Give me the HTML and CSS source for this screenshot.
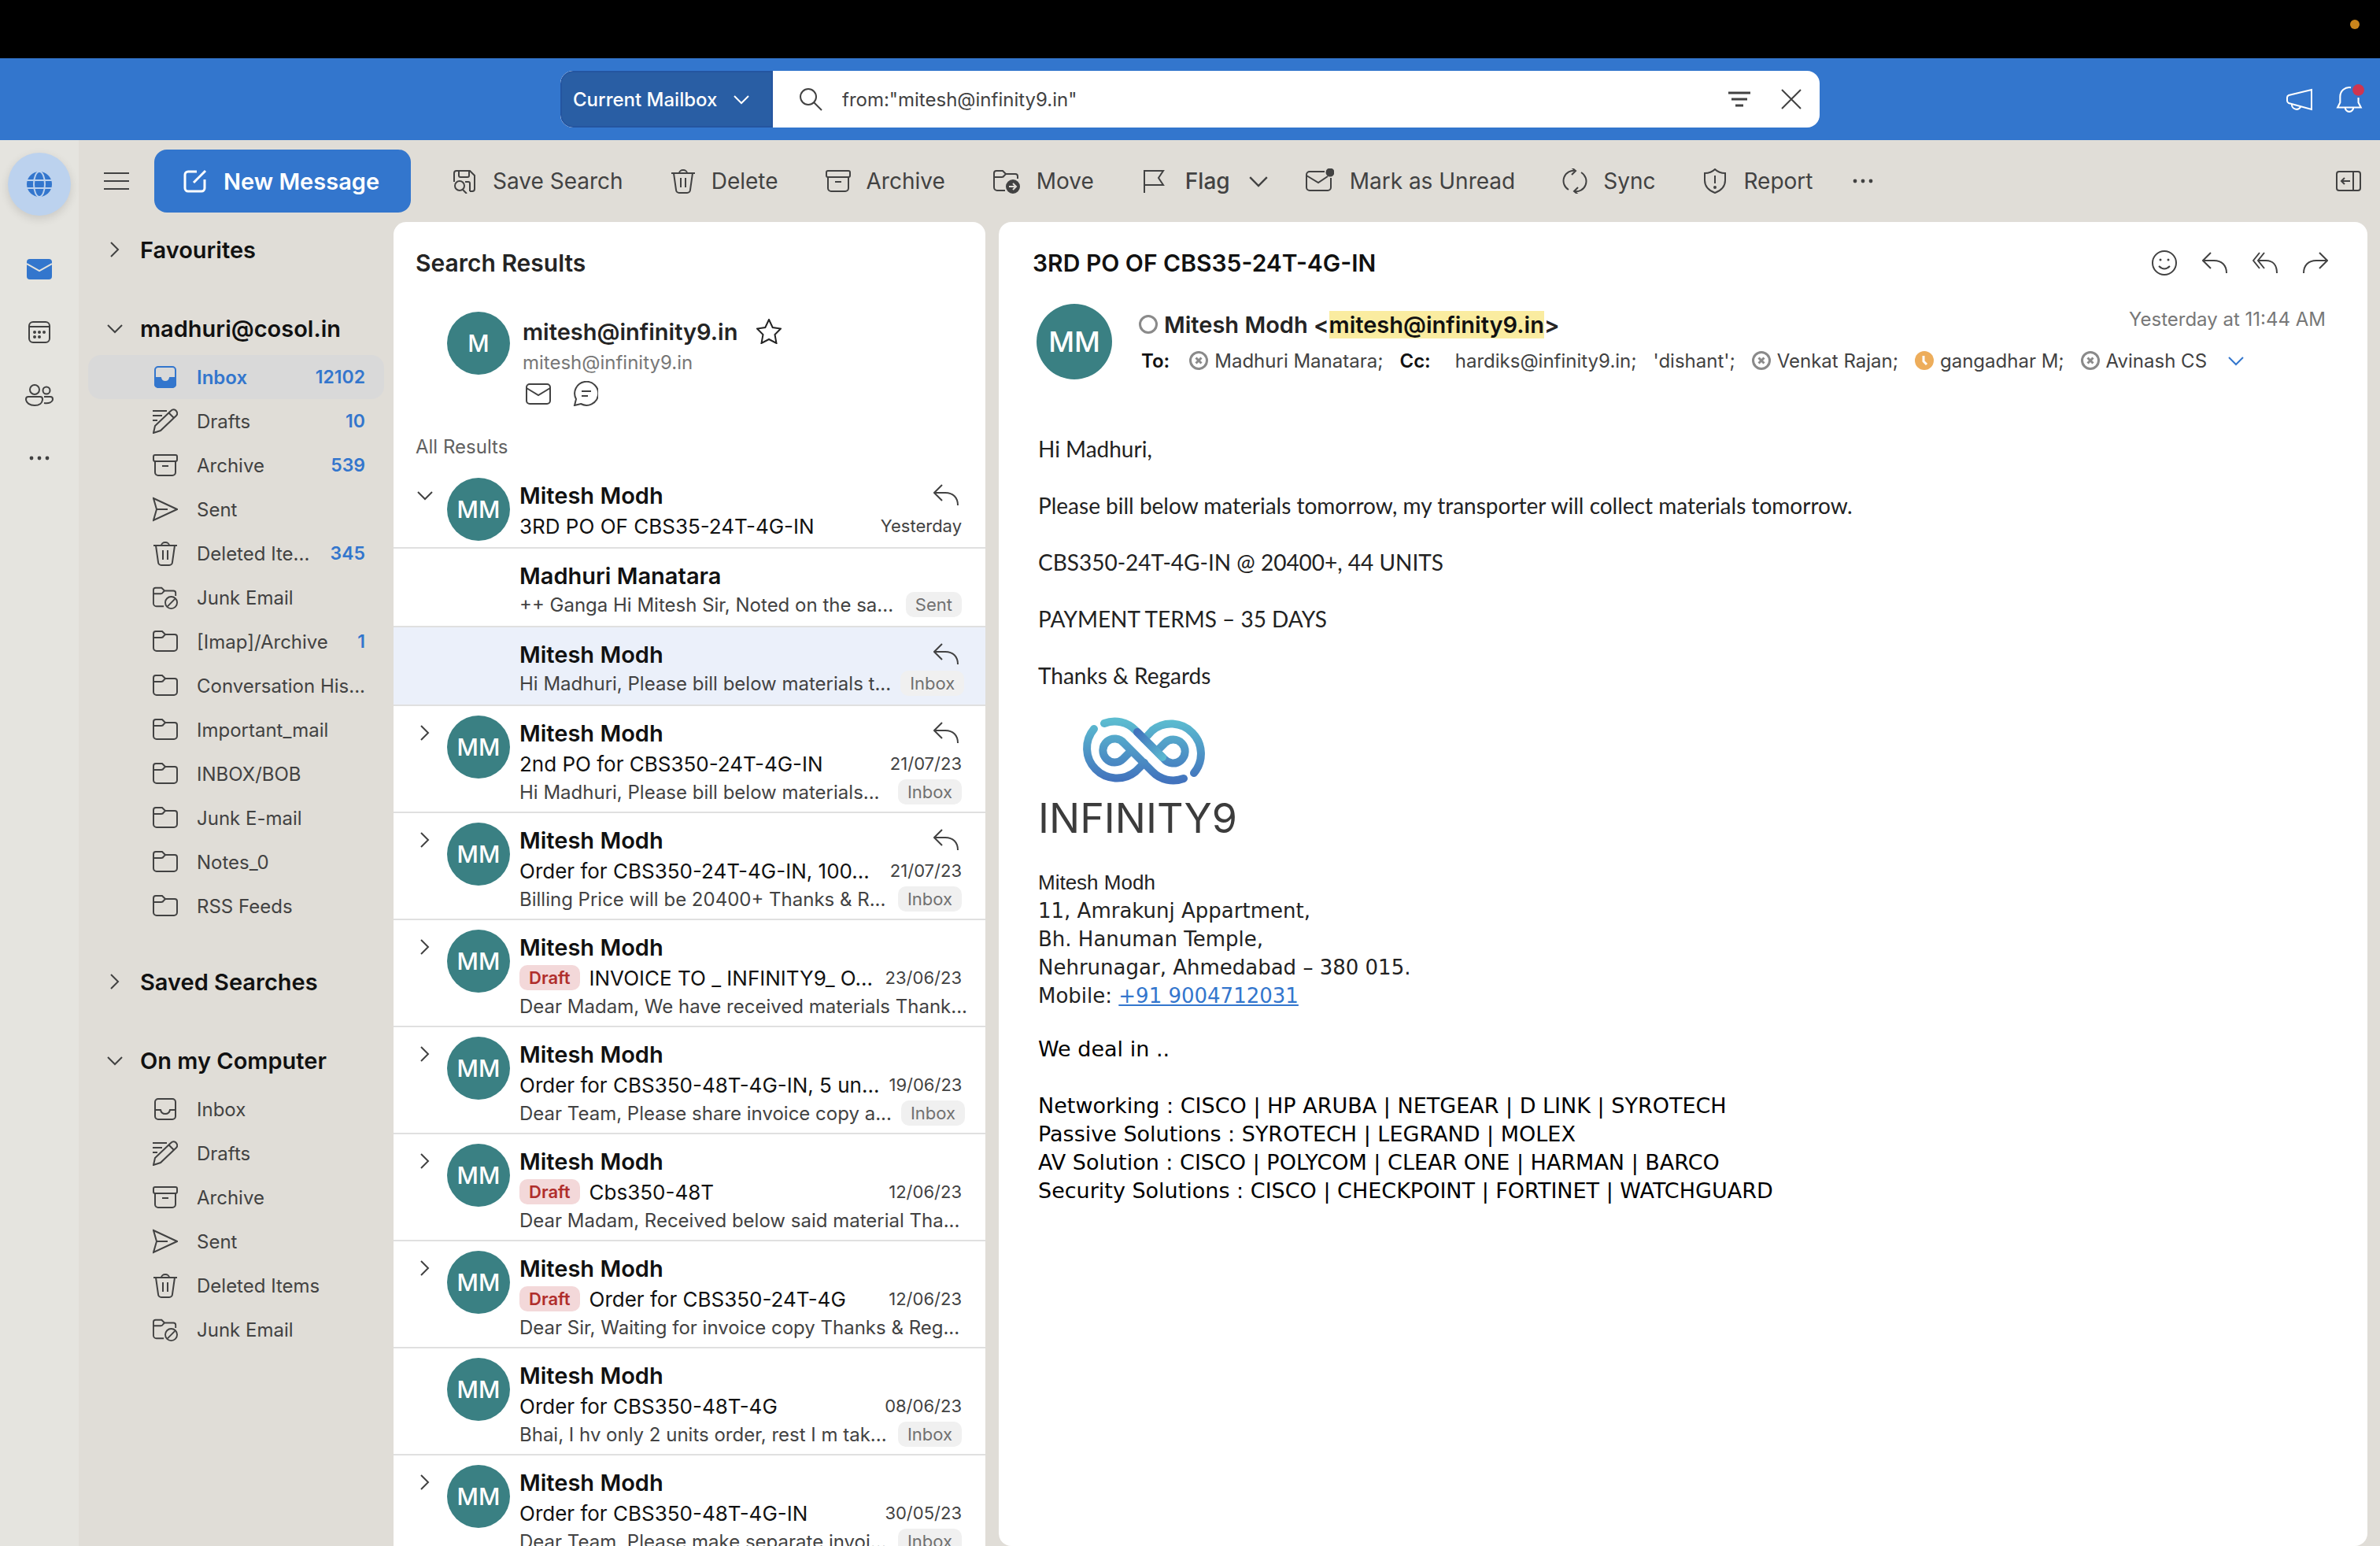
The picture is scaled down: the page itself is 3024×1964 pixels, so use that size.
FILE: index.html
```html
<!DOCTYPE html>
<html lang="en">
<head>
<meta charset="UTF-8">
<meta name="viewport" content="width=device-width, initial-scale=1.0">
<title>Mail - Search Results</title>
<link rel="stylesheet" href="styles.css">
</head>
<body>

<!-- icon sprite -->
<svg class="sprite" aria-hidden="true">
    <symbol id="i-right" viewBox="0 0 20 20"><path d="M5 1l9 9-9 9"/></symbol>
    <symbol id="i-down" viewBox="0 0 20 20"><path d="M1 6l9 9 9-9"/></symbol>
    <symbol id="i-menu" viewBox="0 0 32 32"><path d="M0 6h32M0 16h32M0 26h32"/></symbol>
    <symbol id="i-dots" viewBox="0 0 32 32"><g fill="currentColor" stroke="none"><circle cx="6" cy="16" r="2.4"/><circle cx="16" cy="16" r="2.4"/><circle cx="26" cy="16" r="2.4"/></g></symbol>
    <symbol id="i-edit" viewBox="0 0 32 32"><path d="M18 4H7a4 4 0 0 0-4 4v17a4 4 0 0 0 4 4h17a4 4 0 0 0 4-4V14"/><path d="M29 3L14 18"/></symbol>
    <symbol id="i-save" viewBox="0 0 32 32"><path d="M3 14V6a3 3 0 0 1 3-3h17l6 6v17a3 3 0 0 1-3 3h-3M9 3v6a2 2 0 0 0 2 2h9a2 2 0 0 0 2-2V3M17 17h4a2 2 0 0 1 2 2v10M3 14v3"/><circle cx="10" cy="22" r="6"/><path d="M14 27l5 5"/></symbol>
    <symbol id="i-trash" viewBox="0 0 32 32"><path d="M1 6h30M11 6a5 4 0 0 1 10 0M4 6l3 21a4 4 0 0 0 4 4h10a4 4 0 0 0 4-4l3-21M13 12v12M19 12v12"/></symbol>
    <symbol id="i-archive" viewBox="0 0 32 32"><rect x="1" y="3" width="30" height="8" rx="2"/><path d="M3 11v14a4 4 0 0 0 4 4h18a4 4 0 0 0 4-4V11M12 17h8"/></symbol>
    <symbol id="i-folder" viewBox="0 0 32 32"><path d="M1 24V6a3 3 0 0 1 3-3h8l4 4h12a3 3 0 0 1 3 3v14a4 4 0 0 1-4 4H5a4 4 0 0 1-4-4zM1 11h10q2 0 3-2l2-2"/></symbol>
    <symbol id="i-junk" viewBox="0 0 34 32"><path d="M31 14v-4a3 3 0 0 0-3-3H16l-4-4H4a3 3 0 0 0-3 3v18a4 4 0 0 0 4 4h10M1 11h10q2 0 3-2l2-2"/><circle cx="25" cy="23" r="8"/><path d="M20 28l10-10"/></symbol>
    <symbol id="i-move" viewBox="0 0 34 32"><path d="M31 13v-3a3 3 0 0 0-3-3H16l-4-4H4a3 3 0 0 0-3 3v18a4 4 0 0 0 4 4h10M1 11h10q2 0 3-2l2-2"/><circle cx="25" cy="23" r="8" fill="currentColor"/><path class="knock" d="M20 23h9M25 19l4 4-4 4"/></symbol>
    <symbol id="i-flag" viewBox="0 0 32 32"><path d="M4 31V3h24l-6 9 6 9H4"/></symbol>
    <symbol id="i-unread" viewBox="0 0 36 32"><path d="M24 4H5a4 4 0 0 0-4 4v16a4 4 0 0 0 4 4h23a4 4 0 0 0 4-4V12M1 9l15 9 12-8"/><circle cx="31" cy="5" r="4.500" fill="currentColor"/></symbol>
    <symbol id="i-sync" viewBox="0 0 32 32"><path d="M8 27A13 13 0 0 1 17 3M24 5a13 13 0 0 1-9 24M12-1l5 4-5 5M20 24l-5 5 5 4"/></symbol>
    <symbol id="i-shield" viewBox="0 0 32 32"><path d="M16 1q5 5 13 5v9c0 8-5 13-13 16C8 28 3 23 3 15V6q8 0 13-5zM16 9v10"/><circle cx="16" cy="24" r="1"/></symbol>
    <symbol id="i-panel" viewBox="0 0 32 32"><rect x="1" y="4" width="30" height="24" rx="3"/><path d="M22 4v24M18 16H7M11 12l-4 4 4 4"/></symbol>
    <symbol id="i-search" viewBox="0 0 32 32"><circle cx="13" cy="13" r="10"/><path d="M20 20l10 10"/></symbol>
    <symbol id="i-filter" viewBox="0 0 32 32"><path d="M2 8h28M6 16h20M11 24h10"/></symbol>
    <symbol id="i-close" viewBox="0 0 32 32"><path d="M4 4l24 24M28 4L4 28"/></symbol>
    <symbol id="i-megaphone" viewBox="0 0 34 32"><path d="M32 4v25L3 21q-2-1-2-3v-4q0-2 2-3zM7 22a6 6 0 0 0 11 4"/></symbol>
    <symbol id="i-bell" viewBox="0 0 34 36"><path d="M18 4a11 11 0 0 0-13 11v7l-3 6h28l-3-6v-6M11 28a5 5 0 0 0 10 0"/><circle cx="27" cy="7" r="7" fill="#cf3550" stroke="none"/></symbol>
    <symbol id="i-globe" viewBox="0 0 32 32"><circle cx="16" cy="16" r="16" fill="#3376cd" stroke="none"/><g stroke="#bcd2ee"><ellipse cx="16" cy="16" rx="7" ry="16"/><path d="M0 11h32M0 21h32"/></g></symbol>
    <symbol id="i-mailfill" viewBox="0 0 32 32"><rect x="0" y="3" width="32" height="26" rx="4" fill="#3376cd" stroke="none"/><path d="M0 9l16 9 16-9" stroke="#e5e4df"/></symbol>
    <symbol id="i-calendar" viewBox="0 0 32 32"><rect x="3" y="3" width="26" height="26" rx="5"/><path d="M3 9h26"/><g fill="currentColor" stroke="none"><circle cx="10" cy="16" r="2"/><circle cx="16" cy="16" r="2"/><circle cx="22" cy="16" r="2"/><circle cx="10" cy="22" r="2"/><circle cx="16" cy="22" r="2"/></g></symbol>
    <symbol id="i-people" viewBox="0 0 36 32"><circle cx="12" cy="9" r="6"/><circle cx="27" cy="10" r="4.500"/><path d="M4 18h15a3 3 0 0 1 3 3c0 5-4 8-10 8S1 26 1 21a3 3 0 0 1 3-3zM24 18h8a3 3 0 0 1 3 3c0 4-5 6-11 5"/></symbol>
    <symbol id="i-inbox" viewBox="0 0 32 32"><rect x="3" y="3" width="26" height="26" rx="4"/><path d="M3 17h7q1 5 6 5t6-5h7"/></symbol>
    <symbol id="i-inboxfill" viewBox="0 0 32 32"><rect x="3" y="3" width="26" height="26" rx="4"/><path d="M3 17h7q1 5 6 5t6-5h7v8a4 4 0 0 1-4 4H7a4 4 0 0 1-4-4z" fill="currentColor"/></symbol>
    <symbol id="i-drafts" viewBox="0 0 32 32"><path d="M1 31l2-9L23 3q3-3 6-1 4 4 1 7L10 28zM21 6l6 6M0 3h18M0 9h12M0 15h6"/></symbol>
    <symbol id="i-sent" viewBox="0 0 32 32"><path d="M1 2l30 14L1 30l4-14zM5 16h14"/></symbol>
    <symbol id="i-star" viewBox="0 0 32 32"><path d="M16 1l4.700 10 10.300 1.500-7.500 7.500 2 11L16 26l-9.500 5 2-11L1 12.500 11.300 11z"/></symbol>
    <symbol id="i-mail" viewBox="0 0 32 32"><rect x="1" y="4" width="30" height="25" rx="4"/><path d="M1 9l15 9 15-9"/></symbol>
    <symbol id="i-chat" viewBox="0 0 32 32"><path d="M2 31l2-8A15 15 0 1 1 10 29zM11 13h12M11 19h8"/></symbol>
    <symbol id="i-reply" viewBox="0 0 32 32"><path d="M11 3L1 13l10 10M1 13h14c10 0 16 6 16 16"/></symbol>
    <symbol id="i-replyall" viewBox="0 0 32 32"><path d="M9 3L1 13l8 10M15 3L7 13l8 10M7 13h10c9 0 14 6 14 16"/></symbol>
    <symbol id="i-forward" viewBox="0 0 32 32"><path d="M21 3l10 10-10 10M31 13H17C7 13 1 19 1 29"/></symbol>
    <symbol id="i-smile" viewBox="0 0 32 32"><circle cx="16" cy="16" r="15"/><path d="M9 20q7 7 14 0"/><circle cx="11" cy="12" r="1.500" fill="currentColor" stroke="none"/><circle cx="21" cy="12" r="1.500" fill="currentColor" stroke="none"/></symbol>
    <symbol id="i-none" viewBox="0 0 24 24"><circle cx="12" cy="12" r="10.500"/></symbol>
    <symbol id="i-off" viewBox="0 0 24 24"><circle cx="12" cy="12" r="10.500"/><path d="M8.500 8.500l7 7M15.500 8.500l-7 7"/></symbol>
    <symbol id="i-away" viewBox="0 0 24 24"><circle cx="12" cy="12" r="12" fill="#edad5b" stroke="none"/><path d="M11 6v7l4 4" stroke="#fff"/></symbol>
</svg>

<div class="menubar"><span class="recording"></span></div>

<header class="topbar">
    <form class="search">
        <div class="scope">
            <select aria-label="Search scope"><option>Current Mailbox</option></select>
            <svg class="icon chev"><use href="#i-down"/></svg>
        </div>
        <svg class="icon"><use href="#i-search"/></svg>
        <input type="text" aria-label="Search" value='from:"mitesh@infinity9.in"'>
        <button type="button" aria-label="Filter"><svg class="icon bold"><use href="#i-filter"/></svg></button>
        <button type="button" aria-label="Clear search"><svg class="icon"><use href="#i-close"/></svg></button>
    </form>
    <div class="topActions">
        <button type="button" aria-label="What's new"><svg class="icon wide"><use href="#i-megaphone"/></svg></button>
        <button type="button" aria-label="Notifications"><svg class="icon bell"><use href="#i-bell"/></svg></button>
    </div>
</header>

<div class="app">
    <nav class="rail" aria-label="Apps">
        <button type="button" class="globe" aria-label="Account"><svg class="icon"><use href="#i-globe"/></svg></button>
        <button type="button" aria-label="Mail"><svg class="icon"><use href="#i-mailfill"/></svg></button>
        <button type="button" aria-label="Calendar"><svg class="icon"><use href="#i-calendar"/></svg></button>
        <button type="button" aria-label="People"><svg class="icon wide"><use href="#i-people"/></svg></button>
        <button type="button" aria-label="More apps"><svg class="icon"><use href="#i-dots"/></svg></button>
    </nav>

    <div class="workspace">
        <div class="toolbar">
            <button type="button" class="menuBtn" aria-label="Toggle sidebar"><svg class="icon"><use href="#i-menu"/></svg></button>
            <button type="button" class="newMessage"><svg class="icon bold"><use href="#i-edit"/></svg>New Message</button>
            <button type="button" class="tool"><svg class="icon"><use href="#i-save"/></svg>Save Search</button>
            <button type="button" class="tool"><svg class="icon"><use href="#i-trash"/></svg>Delete</button>
            <button type="button" class="tool"><svg class="icon"><use href="#i-archive"/></svg>Archive</button>
            <button type="button" class="tool"><svg class="icon wide"><use href="#i-move"/></svg>Move</button>
            <button type="button" class="tool flag"><svg class="icon"><use href="#i-flag"/></svg>Flag<svg class="icon chev big"><use href="#i-down"/></svg></button>
            <button type="button" class="tool"><svg class="icon wide"><use href="#i-unread"/></svg>Mark as Unread</button>
            <button type="button" class="tool"><svg class="icon"><use href="#i-sync"/></svg>Sync</button>
            <button type="button" class="tool"><svg class="icon"><use href="#i-shield"/></svg>Report</button>
            <button type="button" class="moreBtn" aria-label="More"><svg class="icon"><use href="#i-dots"/></svg></button>
            <button type="button" class="panelBtn" aria-label="Toggle task pane"><svg class="icon"><use href="#i-panel"/></svg></button>
        </div>

        <div class="columns">
            <aside class="sidebar">
                <section>
                    <h2><svg class="icon chev"><use href="#i-right"/></svg>Favourites</h2>
                </section>
                <section>
                    <h2><svg class="icon chev"><use href="#i-down"/></svg>madhuri@cosol.in</h2>
                    <ul>
                        <li class="selected"><svg class="icon"><use href="#i-inboxfill"/></svg><span>Inbox</span><b>12102</b></li>
                        <li><svg class="icon"><use href="#i-drafts"/></svg><span>Drafts</span><b>10</b></li>
                        <li><svg class="icon"><use href="#i-archive"/></svg><span>Archive</span><b>539</b></li>
                        <li><svg class="icon"><use href="#i-sent"/></svg><span>Sent</span></li>
                        <li><svg class="icon"><use href="#i-trash"/></svg><span>Deleted Ite...</span><b>345</b></li>
                        <li><svg class="icon"><use href="#i-junk"/></svg><span>Junk Email</span></li>
                        <li><svg class="icon"><use href="#i-folder"/></svg><span>[Imap]/Archive</span><b>1</b></li>
                        <li><svg class="icon"><use href="#i-folder"/></svg><span>Conversation His...</span></li>
                        <li><svg class="icon"><use href="#i-folder"/></svg><span>Important_mail</span></li>
                        <li><svg class="icon"><use href="#i-folder"/></svg><span>INBOX/BOB</span></li>
                        <li><svg class="icon"><use href="#i-folder"/></svg><span>Junk E-mail</span></li>
                        <li><svg class="icon"><use href="#i-folder"/></svg><span>Notes_0</span></li>
                        <li><svg class="icon"><use href="#i-folder"/></svg><span>RSS Feeds</span></li>
                    </ul>
                </section>
                <section>
                    <h2><svg class="icon chev"><use href="#i-right"/></svg>Saved Searches</h2>
                </section>
                <section>
                    <h2><svg class="icon chev"><use href="#i-down"/></svg>On my Computer</h2>
                    <ul>
                        <li><svg class="icon"><use href="#i-inbox"/></svg><span>Inbox</span></li>
                        <li><svg class="icon"><use href="#i-drafts"/></svg><span>Drafts</span></li>
                        <li><svg class="icon"><use href="#i-archive"/></svg><span>Archive</span></li>
                        <li><svg class="icon"><use href="#i-sent"/></svg><span>Sent</span></li>
                        <li><svg class="icon"><use href="#i-trash"/></svg><span>Deleted Items</span></li>
                        <li><svg class="icon"><use href="#i-junk"/></svg><span>Junk Email</span></li>
                    </ul>
                </section>
            </aside>

            <main class="results">
                <h1>Search Results</h1>
                <div class="contact">
                    <span class="avatar">M</span>
                    <div>
                        <div class="contactName">mitesh@infinity9.in <svg class="icon"><use href="#i-star"/></svg></div>
                        <div class="contactMail">mitesh@infinity9.in</div>
                        <div class="contactActions">
                            <button type="button" aria-label="Email"><svg class="icon"><use href="#i-mail"/></svg></button>
                            <button type="button" aria-label="Chat"><svg class="icon"><use href="#i-chat"/></svg></button>
                        </div>
                    </div>
                </div>
                <h3>All Results</h3>

                <ul class="messages">
                    <li>
                        <svg class="icon chev"><use href="#i-down"/></svg>
                        <span class="avatar">MM</span>
                        <div class="message">
                            <div class="from"><span>Mitesh Modh</span><svg class="icon"><use href="#i-reply"/></svg></div>
                            <div class="subject"><span>3RD PO OF CBS35-24T-4G-IN</span><time>Yesterday</time></div>
                        </div>
                    </li>
                    <li class="child">
                        <div class="message">
                            <div class="from"><span>Madhuri Manatara</span></div>
                            <div class="preview"><span>++ Ganga Hi Mitesh Sir, Noted on the sa...</span><em>Sent</em></div>
                        </div>
                    </li>
                    <li class="child current">
                        <div class="message">
                            <div class="from"><span>Mitesh Modh</span><svg class="icon"><use href="#i-reply"/></svg></div>
                            <div class="preview"><span>Hi Madhuri, Please bill below materials t...</span><em>Inbox</em></div>
                        </div>
                    </li>
                    <li>
                        <svg class="icon chev"><use href="#i-right"/></svg>
                        <span class="avatar">MM</span>
                        <div class="message">
                            <div class="from"><span>Mitesh Modh</span><svg class="icon"><use href="#i-reply"/></svg></div>
                            <div class="subject"><span>2nd PO for CBS350-24T-4G-IN</span><time>21/07/23</time></div>
                            <div class="preview"><span>Hi Madhuri, Please bill below materials...</span><em>Inbox</em></div>
                        </div>
                    </li>
                    <li>
                        <svg class="icon chev"><use href="#i-right"/></svg>
                        <span class="avatar">MM</span>
                        <div class="message">
                            <div class="from"><span>Mitesh Modh</span><svg class="icon"><use href="#i-reply"/></svg></div>
                            <div class="subject"><span>Order for CBS350-24T-4G-IN, 100...</span><time>21/07/23</time></div>
                            <div class="preview"><span>Billing Price will be 20400+ Thanks &amp; R...</span><em>Inbox</em></div>
                        </div>
                    </li>
                    <li>
                        <svg class="icon chev"><use href="#i-right"/></svg>
                        <span class="avatar">MM</span>
                        <div class="message">
                            <div class="from"><span>Mitesh Modh</span></div>
                            <div class="subject"><strong>Draft</strong><span>INVOICE TO _ INFINITY9_ O...</span><time>23/06/23</time></div>
                            <div class="preview"><span>Dear Madam, We have received materials Thank...</span></div>
                        </div>
                    </li>
                    <li>
                        <svg class="icon chev"><use href="#i-right"/></svg>
                        <span class="avatar">MM</span>
                        <div class="message">
                            <div class="from"><span>Mitesh Modh</span></div>
                            <div class="subject"><span>Order for CBS350-48T-4G-IN, 5 un...</span><time>19/06/23</time></div>
                            <div class="preview"><span>Dear Team, Please share invoice copy a...</span><em>Inbox</em></div>
                        </div>
                    </li>
                    <li>
                        <svg class="icon chev"><use href="#i-right"/></svg>
                        <span class="avatar">MM</span>
                        <div class="message">
                            <div class="from"><span>Mitesh Modh</span></div>
                            <div class="subject"><strong>Draft</strong><span>Cbs350-48T</span><time>12/06/23</time></div>
                            <div class="preview"><span>Dear Madam, Received below said material Tha...</span></div>
                        </div>
                    </li>
                    <li>
                        <svg class="icon chev"><use href="#i-right"/></svg>
                        <span class="avatar">MM</span>
                        <div class="message">
                            <div class="from"><span>Mitesh Modh</span></div>
                            <div class="subject"><strong>Draft</strong><span>Order for CBS350-24T-4G</span><time>12/06/23</time></div>
                            <div class="preview"><span>Dear Sir, Waiting for invoice copy Thanks &amp; Reg...</span></div>
                        </div>
                    </li>
                    <li>
                        <svg class="icon chev"></svg>
                        <span class="avatar">MM</span>
                        <div class="message">
                            <div class="from"><span>Mitesh Modh</span></div>
                            <div class="subject"><span>Order for CBS350-48T-4G</span><time>08/06/23</time></div>
                            <div class="preview"><span>Bhai, I hv only 2 units order, rest I m tak...</span><em>Inbox</em></div>
                        </div>
                    </li>
                    <li>
                        <svg class="icon chev"><use href="#i-right"/></svg>
                        <span class="avatar">MM</span>
                        <div class="message">
                            <div class="from"><span>Mitesh Modh</span></div>
                            <div class="subject"><span>Order for CBS350-48T-4G-IN</span><time>30/05/23</time></div>
                            <div class="preview"><span>Dear Team, Please make separate invoi...</span><em>Inbox</em></div>
                        </div>
                    </li>
                </ul>
            </main>

            <article class="reader">
                <div class="readerTop">
                    <h1>3RD PO OF CBS35-24T-4G-IN</h1>
                    <div class="readerActions">
                        <button type="button" aria-label="React"><svg class="icon"><use href="#i-smile"/></svg></button>
                        <button type="button" aria-label="Reply"><svg class="icon"><use href="#i-reply"/></svg></button>
                        <button type="button" aria-label="Reply all"><svg class="icon"><use href="#i-replyall"/></svg></button>
                        <button type="button" aria-label="Forward"><svg class="icon"><use href="#i-forward"/></svg></button>
                    </div>
                </div>
                <div class="sender">
                    <span class="avatar large">MM</span>
                    <div class="senderInfo">
                        <div class="senderName">
                            <svg class="presence"><use href="#i-none"/></svg>
                            <span>Mitesh Modh &lt;<mark>mitesh@infinity9.in</mark>&gt;</span>
                            <time>Yesterday at 11:44 AM</time>
                        </div>
                        <div class="recipients">
                            <b class="to">To:</b>
                            <span><svg class="presence"><use href="#i-off"/></svg>Madhuri Manatara;</span>
                            <b class="cc">Cc:</b>
                            <span>hardiks@infinity9.in;</span>
                            <span>'dishant';</span>
                            <span><svg class="presence"><use href="#i-off"/></svg>Venkat Rajan;</span>
                            <span><svg class="presence"><use href="#i-away"/></svg>gangadhar M;</span>
                            <span><svg class="presence"><use href="#i-off"/></svg>Avinash CS</span>
                            <button type="button" aria-label="Show all recipients"><svg class="icon chev"><use href="#i-down"/></svg></button>
                        </div>
                    </div>
                </div>

                <div class="mailBody">
                    <p>Hi Madhuri,</p>
                    <p>Please bill below materials tomorrow, my transporter will collect materials tomorrow.</p>
                    <p>CBS350-24T-4G-IN @ 20400+, 44 UNITS</p>
                    <p>PAYMENT TERMS – 35 DAYS</p>
                    <p>Thanks &amp; Regards</p>

                    <div class="brand">
                        <svg viewBox="0 0 171 88" role="img" aria-label="Infinity9 logo">
                            <defs>
                                <linearGradient id="brandFill" gradientUnits="userSpaceOnUse" x1="0" y1="5" x2="0" y2="82">
                                    <stop offset="0" stop-color="#5cbcd0"/>
                                    <stop offset="1" stop-color="#4273bd"/>
                                </linearGradient>
                                <linearGradient id="brandDown" gradientUnits="userSpaceOnUse" x1="76" y1="20" x2="112" y2="56">
                                    <stop offset="0" stop-color="#4273bd"/>
                                    <stop offset="1" stop-color="#5cbcd0"/>
                                </linearGradient>
                            </defs>
                            <g class="brandLine">
                                <path d="M22 16A38 38 0 0 0 75 70L86 59"/>
                                <path d="M149 72A38 38 0 0 0 96 18L86 29"/>
                                <path d="M35 9A37 37 0 0 1 75 18L111 54A15 15 0 1 0 112 34L102 44"/>
                                <path d="M136 79A37 37 0 0 1 96 70L60 34A15 15 0 1 0 59 54L69 44"/>
                                <path d="M77 20L109 52" stroke="url(#brandDown)"/>
                            </g>
                        </svg>
                        <span>INFINITY9</span>
                    </div>

                    <address>
                        <span class="signName">Mitesh Modh</span><br>
                        11, Amrakunj Appartment,<br>
                        Bh. Hanuman Temple,<br>
                        Nehrunagar, Ahmedabad – 380 015.<br>
                        Mobile: <a href="tel:+919004712031">+91 9004712031</a>
                    </address>
                    <div class="deals">We deal in ..</div>
                    <div class="deals">
                        Networking : CISCO | HP ARUBA | NETGEAR | D LINK | SYROTECH<br>
                        Passive Solutions : SYROTECH | LEGRAND | MOLEX<br>
                        AV Solution : CISCO | POLYCOM | CLEAR ONE | HARMAN | BARCO<br>
                        Security Solutions : CISCO | CHECKPOINT | FORTINET | WATCHGUARD
                    </div>
                </div>
            </article>
        </div>
    </div>
</div>

</body>
</html>
```
FILE: styles.css
```css
* {
    box-sizing: border-box;
}

body {
    display: flex;
    flex-direction: column;
    height: 100vh;
    margin: 0;
    overflow: hidden;
    background: #e0ddd7;
    color: #424242;
    font-family: Inter, "Liberation Sans", sans-serif;
    font-size: 24px;
}

h1, h2, h3, p, ul {
    margin: 0;
    padding: 0;
}

ul {
    list-style: none;
}

button, input, select {
    border: 0;
    background: none;
    color: inherit;
    font: inherit;
    padding: 0;
}

button {
    display: flex;
    align-items: center;
}

/* icons */
.sprite {
    position: absolute;
    width: 0;
    height: 0;
}

.icon {
    width: 32px;
    height: 32px;
    flex: none;
    fill: none;
    stroke: currentColor;
    stroke-width: 2;
    overflow: visible;
}

.icon.wide {
    width: 36px;
}

.icon.bell {
    width: 36px;
    height: 38px;
}

.icon.bold {
    stroke-width: 3;
}

.icon.chev {
    width: 20px;
    height: 20px;
}

.icon.chev.big {
    width: 24px;
    height: 24px;
}

.knock {
    stroke: #e0ddd7;
}

.presence {
    width: 24px;
    height: 24px;
    flex: none;
    fill: none;
    stroke: #8a8a8a;
    stroke-width: 3;
}

/* top bars */
.menubar {
    display: flex;
    justify-content: flex-end;
    flex: none;
    height: 74px;
    padding: 25px 26px 0 0;
    background: #000;
}

.recording {
    width: 12px;
    height: 12px;
    border-radius: 50%;
    background: #c8841c;
}

.topbar {
    display: grid;
    grid-template-columns: 1fr minmax(0, 1600px) 1fr;
    align-items: center;
    flex: none;
    height: 104px;
    background: #3376cd;
}

.search {
    grid-column: 2;
    display: flex;
    align-items: center;
    gap: 24px;
    height: 72px;
    padding-right: 20px;
    border-radius: 16px;
    background: #fff;
    overflow: hidden;
}

.search input {
    flex: 1;
    min-width: 0;
    outline: 0;
}

.search button + button {
    margin-left: 10px;
}

.scope {
    display: grid;
    align-items: center;
    width: 270px;
    height: 72px;
    margin-right: 8px;
    border: 2px solid #2455a0;
    border-radius: 16px 0 0 16px;
    background: #295ea4;
    color: #fff;
    font-weight: 500;
}

.scope select, .scope .icon {
    grid-area: 1 / 1;
}

.scope select {
    width: 100%;
    height: 100%;
    padding-left: 14px;
    appearance: none;
}

.scope .icon {
    justify-self: end;
    margin-right: 28px;
    pointer-events: none;
}

.topActions {
    display: flex;
    align-items: center;
    justify-content: flex-end;
    gap: 28px;
    padding-right: 20px;
    color: #fff;
}

/* app frame */
.app {
    display: flex;
    flex: 1;
    min-height: 0;
}

.rail {
    display: flex;
    flex-direction: column;
    align-items: center;
    flex: none;
    width: 100px;
    padding-top: 16px;
    background: #e5e4df;
}

.rail button {
    justify-content: center;
    width: 80px;
    height: 80px;
}

.rail .globe {
    margin-bottom: 28px;
    border-radius: 50%;
    background: #bcd2ee;
    box-shadow: 0 4px 12px rgba(0, 0, 0, 0.12);
}

.workspace {
    display: flex;
    flex-direction: column;
    flex: 1;
    min-width: 0;
}

.toolbar {
    display: flex;
    align-items: center;
    gap: 60px;
    flex: none;
    height: 104px;
    padding: 0 24px 0 32px;
    font-size: 28px;
}

.menuBtn {
    margin-right: -28px;
}

.newMessage {
    gap: 20px;
    height: 80px;
    margin-right: -8px;
    padding: 0 40px 0 36px;
    border-radius: 16px;
    background: #3376cd;
    color: #fff;
    font-size: 29px;
    font-weight: 600;
}

.tool {
    gap: 20px;
}

.tool.flag {
    gap: 24px;
    margin-right: -12px;
    font-weight: 500;
}

.moreBtn {
    margin-right: auto;
    margin-left: -12px;
}

.columns {
    display: flex;
    flex: 1;
    min-height: 0;
    padding-right: 16px;
}

/* folder list */
.sidebar {
    display: flex;
    flex-direction: column;
    gap: 36px;
    flex: none;
    width: 400px;
    padding: 3px 12px 0;
}

.sidebar h2 {
    display: flex;
    align-items: center;
    gap: 22px;
    height: 64px;
    padding-left: 24px;
    color: #111;
    font-size: 29px;
    font-weight: 600;
}

.sidebar h2 .icon {
    color: #424242;
}

.sidebar ul {
    padding-top: 2px;
}

.sidebar li {
    display: flex;
    align-items: center;
    gap: 24px;
    height: 56px;
    padding: 0 24px 0 82px;
    border-radius: 16px;
    white-space: nowrap;
}

.sidebar li b {
    margin-left: auto;
    color: #3376cd;
    font-size: 23px;
    font-weight: 600;
}

.sidebar .selected {
    background: #d9d9d9;
    color: #3376cd;
    font-weight: 600;
}

/* search results */
.results, .reader {
    background: #fff;
    border-radius: 16px 16px 0 0;
    overflow: hidden;
}

.results {
    flex: none;
    width: 752px;
    margin-right: 17px;
}

.results h1, .reader h1 {
    font-size: 30px;
    font-weight: 600;
    line-height: 40px;
}

.results h1 {
    padding: 32px 28px 0;
    color: #242424;
}

.avatar {
    display: flex;
    align-items: center;
    justify-content: center;
    flex: none;
    width: 80px;
    height: 80px;
    border-radius: 50%;
    background: #3a8083;
    color: #fff;
    font-size: 30px;
    font-weight: 500;
}

.avatar.large {
    width: 96px;
    height: 96px;
    font-size: 36px;
}

.contact {
    display: flex;
    gap: 16px;
    padding: 42px 28px 0 68px;
}

.contactName {
    display: flex;
    align-items: center;
    gap: 24px;
    height: 50px;
    color: #242424;
    font-size: 29px;
    font-weight: 600;
}

.contactMail {
    color: #777;
    line-height: 30px;
}

.contactActions {
    display: flex;
    gap: 28px;
    padding: 8px 4px;
}

.results h3 {
    padding: 26px 28px 0;
    color: #616161;
    font-size: 24px;
    font-weight: 400;
    line-height: 36px;
}

.messages {
    padding-top: 9px;
}

.messages li {
    display: flex;
    padding: 12px 30px 8px 30px;
    border-bottom: 2px solid #e0e0e0;
}

.messages li > .chev {
    margin: 12px 18px 0 0;
}

.messages li.child {
    padding-left: 160px;
}

.messages .current {
    background: #ebf0fa;
}

.message {
    flex: 1;
    min-width: 0;
    padding: 2px 0 0 12px;
}

.child .message {
    padding: 2px 0;
}

.message > div {
    display: flex;
    align-items: center;
    justify-content: space-between;
    gap: 12px;
    white-space: nowrap;
}

.from {
    height: 40px;
    padding-right: 4px;
    color: #111;
    font-size: 29px;
    font-weight: 600;
}

.from .icon {
    color: #424242;
}

.subject {
    height: 38px;
    color: #111;
    font-size: 26px;
}

.subject span {
    flex: 1;
}

.subject time {
    color: #424242;
    font-size: 22px;
}

.subject strong, .preview em {
    padding: 0 12px;
    border-radius: 10px;
    font-size: 22px;
    font-style: normal;
    line-height: 32px;
}

.subject strong {
    background: #f3d8d9;
    color: #b02e2c;
    font-weight: 600;
}

.preview {
    height: 34px;
}

.preview em {
    background: #f0f0f0;
    color: #707070;
}

/* reading pane */
.reader {
    flex: 1;
    min-width: 0;
    border-radius: 16px;
}

.readerTop {
    display: flex;
    align-items: center;
    justify-content: space-between;
    padding: 32px 50px 0 43px;
}

.reader h1 {
    color: #111;
}

.readerActions {
    display: flex;
    gap: 32px;
}

.sender {
    display: flex;
    gap: 34px;
    padding: 32px 53px 0 48px;
}

.senderInfo {
    flex: 1;
}

.senderName, .recipients {
    display: flex;
    align-items: center;
}

.senderName {
    gap: 8px;
    height: 52px;
    color: #242424;
    font-size: 29px;
    font-weight: 600;
}

.senderName mark {
    background: #faeca0;
    color: #111;
}

.senderName time {
    align-self: flex-start;
    margin-left: auto;
    color: #777;
    font-size: 24px;
    font-weight: 400;
    line-height: 40px;
}

.recipients {
    gap: 21px;
    height: 40px;
    padding-left: 3px;
    white-space: nowrap;
}

.recipients span {
    display: flex;
    align-items: center;
    gap: 8px;
}

.recipients b {
    color: #111;
    font-weight: 600;
}

.recipients .to {
    margin-right: 4px;
}

.recipients .cc {
    margin-right: 10px;
}

.recipients button {
    margin-left: 6px;
    color: #3376cd;
}

.mailBody {
    padding: 70px 50px;
    color: #222;
    font: 26px/36px "DejaVu Sans", sans-serif;
}

.mailBody p {
    margin-bottom: 36px;
    font-family: Lato, sans-serif;
    font-size: 28px;
}

.brand {
    display: flex;
    flex-direction: column;
    height: 190px;
    color: #3c3c3c;
    font: 52px/60px Inter, sans-serif;
}

.brand svg {
    width: 171px;
    height: 88px;
    margin: -2px 0 12px 49px;
}

.brandLine {
    fill: none;
    stroke: url(#brandFill);
    stroke-width: 10;
    stroke-linecap: round;
    stroke-linejoin: round;
}

address {
    margin-top: 1px;
    font-style: normal;
}

address + .deals {
    margin-top: 32px;
}

.signName {
    font-family: "Liberation Sans", sans-serif;
}

address a {
    color: #3376cd;
}

.deals {
    margin-top: 36px;
    color: #000;
    font-size: 27px;
}
```
